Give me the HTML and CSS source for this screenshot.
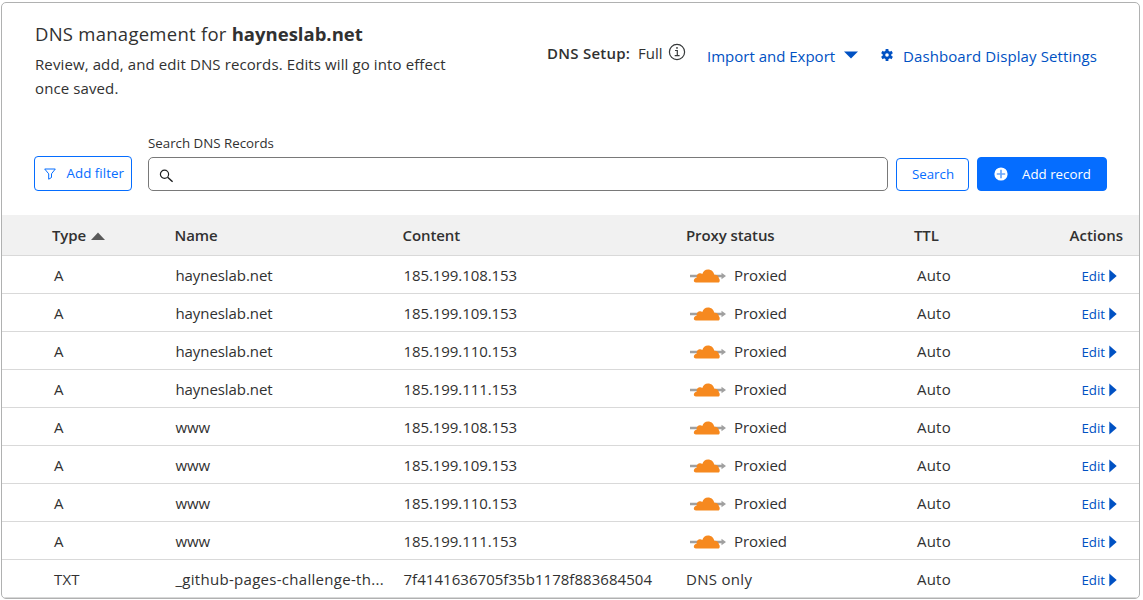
FILE: index.html
```
<!DOCTYPE html>
<html lang="en">
<head>
<meta charset="utf-8">
<title>DNS management</title>
<link rel="stylesheet" href="styles.css">
</head>
<body>
<svg class="defs" width="0" height="0">
  <symbol id="cloud" viewBox="0 0 36 14">
    <path d="M0 5.700h31.500V3.800L36 7l-4.500 3.200V8.300H0z" fill="#a0a0a0"/>
    <path d="M6 13.600C4.300 13.600 3.600 12.300 3.900 11C4.200 9.700 5.200 8.900 6.600 8.700C6.300 6.400 7.500 4.500 9.500 4.200C10.700 4 11.600 4.300 12.300 4.900C13.100 2.200 15 .4 18 .4C21.300 .4 23.800 2.600 24.300 5.800C26.900 5.600 28.700 7 28.900 9.200C30.300 10.800 29.900 13.600 28 13.600z" fill="#f6891f"/>
  </symbol>
</svg>
<main class="card">
  <header class="top">
    <div class="intro">
      <h1>DNS management for <b>hayneslab.net</b></h1>
      <p><span>Review, add, and edit DNS records. Edits will go into effect</span><br><span>once saved.</span></p>
    </div>
    <div class="setup"><b>DNS Setup:</b><span>Full</span>
      <svg width="18" height="18" viewBox="0 0 18 18" fill="none" stroke="#36393a"><circle cx="9" cy="9" r="7.600" stroke-width="1.200"/><path d="M7 7.500h2.300v5.200M6.700 12.700h4.900" stroke-width="1.200"/><circle cx="9" cy="4.900" r=".9" fill="#36393a" stroke="none"/></svg>
    </div>
    <a class="link import">Import and Export</a>
    <svg class="caret" width="14" height="8" viewBox="0 0 14 8"><path d="M0 .4h14L7 7.600z" fill="#0051c3"/></svg>
    <svg class="gear" width="12" height="12" viewBox="0 0 12 12"><g fill="#0051c3"><rect x="4.600" y="0" width="2.800" height="12"/><rect x="4.600" y="0" width="2.800" height="12" transform="rotate(60 6 6)"/><rect x="4.600" y="0" width="2.800" height="12" transform="rotate(120 6 6)"/><circle cx="6" cy="6" r="4.400"/></g><circle cx="6" cy="6" r="1.800" fill="#fff"/></svg>
    <a class="link display">Dashboard Display Settings</a>
  </header>
  <section class="tools">
    <button class="btn filter"><svg width="12" height="12" viewBox="0 0 12 12" fill="none" stroke="#056dff"><path d="M.7 1h10.600L7.500 5.800v3.700L4.700 11.200V5.800z"/></svg><span>Add filter</span></button>
    <div class="field">
      <label>Search DNS Records</label>
      <div class="input"><svg width="15" height="14" viewBox="0 0 15 14" fill="none" stroke="#1d1f20"><circle cx="5.500" cy="5.200" r="4.100" stroke-width="1.200"/><path d="M8.600 8.200l5 4.500" stroke-width="1.500"/></svg></div>
    </div>
    <button class="btn search"><span>Search</span></button>
    <button class="btn add"><svg width="14" height="14" viewBox="0 0 14 14"><circle cx="7" cy="7" r="6.600" fill="#fff"/><path d="M7 2.800v8.400M2.800 7h8.400" stroke="#6ba6fb" stroke-width="1.700"/></svg><span>Add record</span></button>
  </section>
  <section class="table" id="records">
    <div class="row head"><span class="type">Type<svg width="14" height="8" viewBox="0 0 14 8"><path d="M0 8L7 .4 14 8z" fill="#595959"/></svg></span><span class="name">Name</span><span class="content">Content</span><span class="proxy">Proxy status</span><span>TTL</span><span class="action">Actions</span></div>
  </section>
</main>
<script src="records.js"></script>
</body>
</html>
```
FILE: records.js
```
const ips = ["185.199.108.153", "185.199.109.153", "185.199.110.153", "185.199.111.153"];
const records = [
  ...ips.map(ip => ["A", "hayneslab.net", ip, true]),
  ...ips.map(ip => ["A", "www", ip, true]),
  ["TXT", "_github-pages-challenge-th...", "7f4141636705f35b1178f883684504", false]
];
const table = document.getElementById("records");
for (const [type, name, content, proxied] of records) {
  const proxy = proxied
    ? '<svg class="cloud" width="36" height="14"><use href="#cloud"/></svg><span>Proxied</span>'
    : '<span class="dnsonly">DNS only</span>';
  const long = type === "TXT" ? " long" : "";
  table.insertAdjacentHTML("beforeend",
    `<div class="row${long}"><span class="type">${type}</span><span class="name">${name}</span><span class="content">${content}</span><span class="proxy">${proxy}</span><span class="ttl">Auto</span><span class="action"><a>Edit</a><svg width="8" height="14" viewBox="0 0 8 14"><path d="M.3 .5L7.700 7 .3 13.500z" fill="#0051c3"/></svg></span></div>`);
}
```
FILE: styles.css
```
* { box-sizing: border-box; }
body { margin: 0; background: #fff; color: #313131; font: 15px/24px "Open Sans", "Noto Sans", sans-serif; white-space: nowrap; overflow: hidden; }
.defs { display: block; }
.card { width: 1139px; height: 597px; margin: 2px 0 0 1px; border: 1px solid #b0b1b1; border-radius: 5px; overflow: hidden; }
.top { display: flex; height: 130px; padding-left: 33px; }
h1 { margin: 17px 0 0; font-size: 18.5px; line-height: 27px; font-weight: 400; letter-spacing: .26px; }
h1 b { font-weight: 700; letter-spacing: 0; }
.intro { width: 512px; }
.intro p { margin: 5px 0 0; letter-spacing: .11px; }
.setup { display: flex; width: 160px; padding-top: 38px; }
.setup b { font-weight: 600; width: 91px; letter-spacing: .25px; }
.setup span { width: 30px; }
.setup svg { margin-top: 2px; flex: none; }
.link { color: #0051c3; padding-top: 41px; }
.import { width: 137px; }
.caret { margin: 48px 23px 0 0; }
.gear { margin: 46px 10px 0 0; }
.display { letter-spacing: .1px; }
.tools { display: flex; height: 82px; padding-left: 32px; }
.btn { display: flex; align-items: center; border: 1px solid #056dff; border-radius: 4px; background: #fff; color: #056dff; font: 13.300px/20px "Open Sans", "Noto Sans", sans-serif; padding: 0; }
.filter { width: 98px; height: 35px; margin: 23px 16px 0 0; padding-left: 9px; gap: 10.500px; letter-spacing: .05px; }
.filter span { padding-bottom: 2px; }
.field { width: 740px; margin-right: 8px; }
label { display: block; height: 24px; font-size: 13.300px; line-height: 20px; }
.input { height: 34px; border: 1px solid #797979; border-radius: 5px; padding: 11px 0 0 10px; }
.input svg { display: block; }
.search { width: 73px; height: 33px; margin: 25px 8px 0 0; justify-content: center; }
.search span { padding: 0 0 2px 1px; }
.add { width: 130px; height: 34px; margin-top: 24px; background: #056dff; color: #fff; padding-left: 16px; gap: 14px; }
.row { display: grid; grid-template-columns: 121.500px 228px 282.500px 231px 80px 131px; align-items: center; height: 38px; padding-left: 52px; border-bottom: 1px solid #d9d9d9; letter-spacing: -.08px; }
.long .type { letter-spacing: .2px; }
.long .name { letter-spacing: .29px; }
.long .content { letter-spacing: .04px; }
.dnsonly { letter-spacing: .3px; }
.head { height: 41px; padding-left: 50px; grid-template-columns: 122.500px 228px 283.500px 228px 70px 140px; background: #f1f1f1; font-weight: 600; letter-spacing: -.1px; }
.head svg { margin: 0 0 1px 5px; }
.proxy { display: flex; align-items: center; }
.cloud { margin: 2px 8px 0 4px; }
.ttl { letter-spacing: .2px; }
.action { display: flex; align-items: center; justify-content: flex-end; padding: 2px 11px 0 0; color: #0051c3; font-size: 13.300px; gap: 4px; letter-spacing: 0; }
.head .action { color: #313131; font-size: 15px; padding: 0 1px 0 0; }
```
